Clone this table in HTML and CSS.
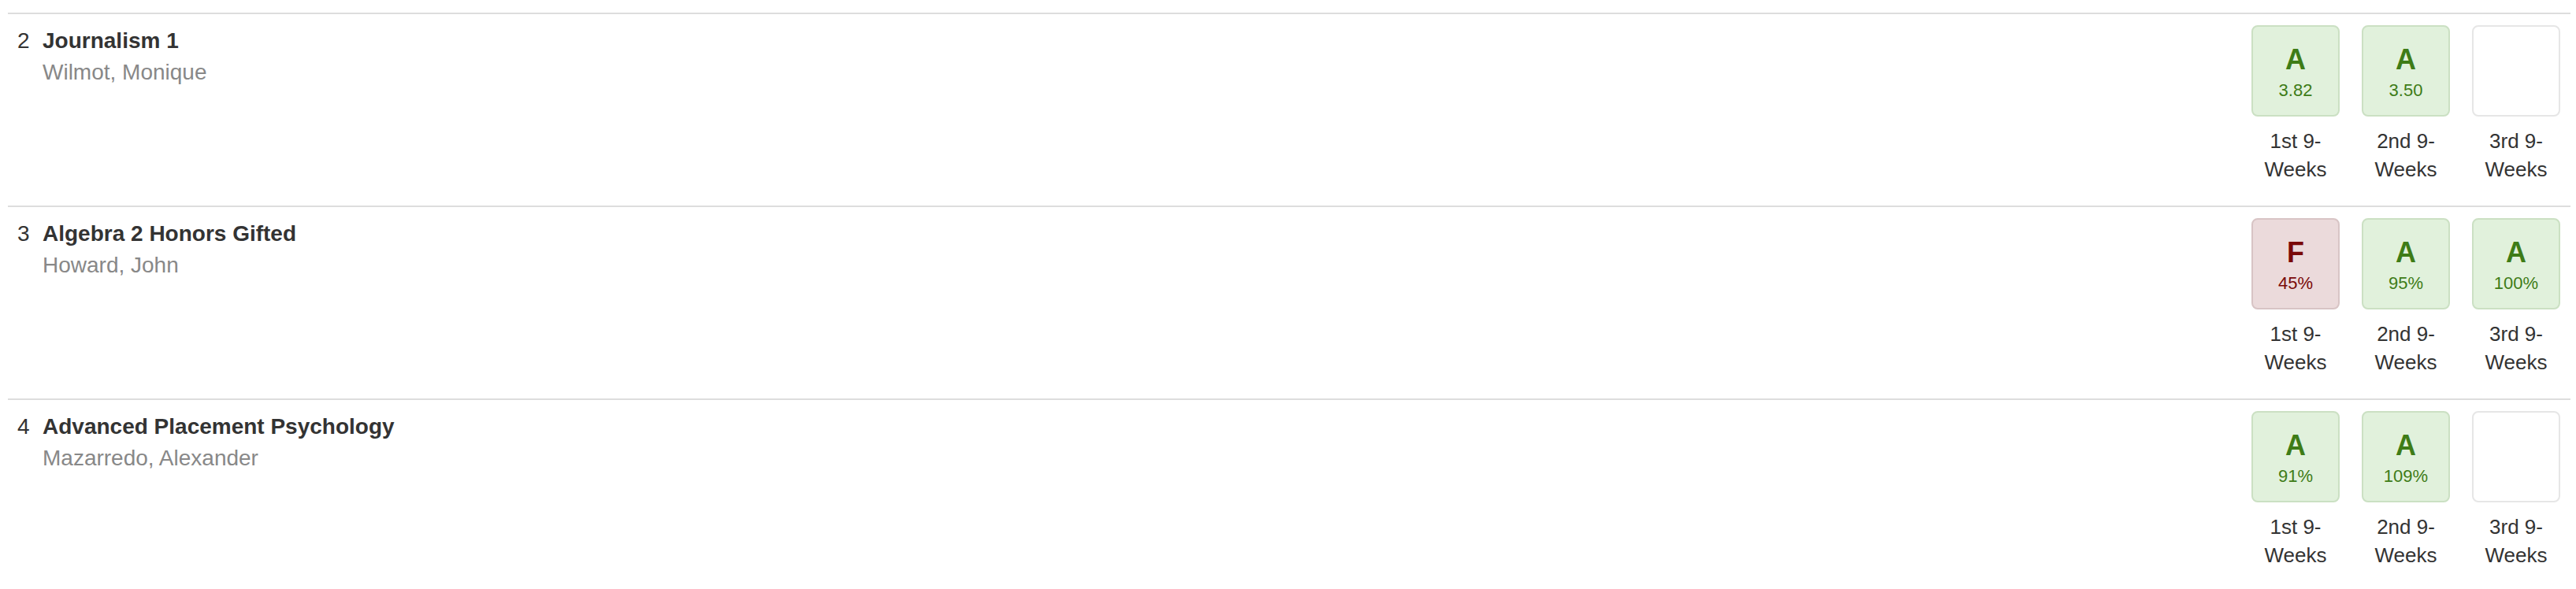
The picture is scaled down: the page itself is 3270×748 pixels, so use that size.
FILE: index.html
```html
<!DOCTYPE html>
<html>
<head>
<meta charset="utf-8">
<link rel="stylesheet" href="styles.css">
</head>
<body>
<div class="list">
  <div class="row">
    <div class="course">
      <span class="num">2</span>
      <div class="info">
        <div class="title">Journalism 1</div>
        <div class="teacher">Wilmot, Monique</div>
      </div>
    </div>
    <div class="grades">
      <div class="period"><div class="box pass"><div class="letter">A</div><div class="score">3.82</div></div><div class="label">1st 9-Weeks</div></div>
      <div class="period"><div class="box pass"><div class="letter">A</div><div class="score">3.50</div></div><div class="label">2nd 9-Weeks</div></div>
      <div class="period"><div class="box empty"></div><div class="label">3rd 9-Weeks</div></div>
    </div>
  </div>
  <div class="row">
    <div class="course">
      <span class="num">3</span>
      <div class="info">
        <div class="title">Algebra 2 Honors Gifted</div>
        <div class="teacher">Howard, John</div>
      </div>
    </div>
    <div class="grades">
      <div class="period"><div class="box fail"><div class="letter">F</div><div class="score">45%</div></div><div class="label">1st 9-Weeks</div></div>
      <div class="period"><div class="box pass"><div class="letter">A</div><div class="score">95%</div></div><div class="label">2nd 9-Weeks</div></div>
      <div class="period"><div class="box pass"><div class="letter">A</div><div class="score">100%</div></div><div class="label">3rd 9-Weeks</div></div>
    </div>
  </div>
  <div class="row">
    <div class="course">
      <span class="num">4</span>
      <div class="info">
        <div class="title">Advanced Placement Psychology</div>
        <div class="teacher">Mazarredo, Alexander</div>
      </div>
    </div>
    <div class="grades">
      <div class="period"><div class="box pass"><div class="letter">A</div><div class="score">91%</div></div><div class="label">1st 9-Weeks</div></div>
      <div class="period"><div class="box pass"><div class="letter">A</div><div class="score">109%</div></div><div class="label">2nd 9-Weeks</div></div>
      <div class="period"><div class="box empty"></div><div class="label">3rd 9-Weeks</div></div>
    </div>
  </div>
</div>
</body>
</html>
```

FILE: styles.css
```css
html, body {
  margin: 0;
  padding: 0;
  background: #fff;
}
body {
  font-family: "Liberation Sans", Arial, sans-serif;
  font-size: 28px;
  color: #333;
}
.list {
  margin: 0 7px 0 10px;
  padding-top: 16px;
}
.row {
  display: flex;
  justify-content: space-between;
  border-top: 2px solid #dddddd;
  padding: 14px 13px 28px 12px;
  height: 201px;
}
.course {
  display: flex;
  align-items: flex-start;
  line-height: 40px;
}
.num {
  width: 32px;
}
.title {
  font-weight: bold;
}
.teacher {
  color: #888;
}
.grades {
  display: flex;
  gap: 28px;
}
.period {
  width: 112px;
  display: flex;
  flex-direction: column;
  align-items: center;
}
.box {
  box-sizing: border-box;
  width: 112px;
  height: 116px;
  border: 2px solid #e6e6e6;
  border-radius: 8px;
  padding-top: 24px;
  text-align: center;
}
.box.pass {
  background: #e1f1dc;
  border-color: #cbe0c3;
  color: #3e7c17;
}
.box.fail {
  background: #ebdadb;
  border-color: #d8c4c5;
  color: #7a0909;
}
.letter {
  font-size: 36px;
  font-weight: bold;
  line-height: 36px;
}
.score {
  font-size: 22px;
  line-height: 26px;
  margin-top: 8px;
}
.label {
  margin-top: 13px;
  font-size: 26px;
  line-height: 36px;
  text-align: center;
}
```
